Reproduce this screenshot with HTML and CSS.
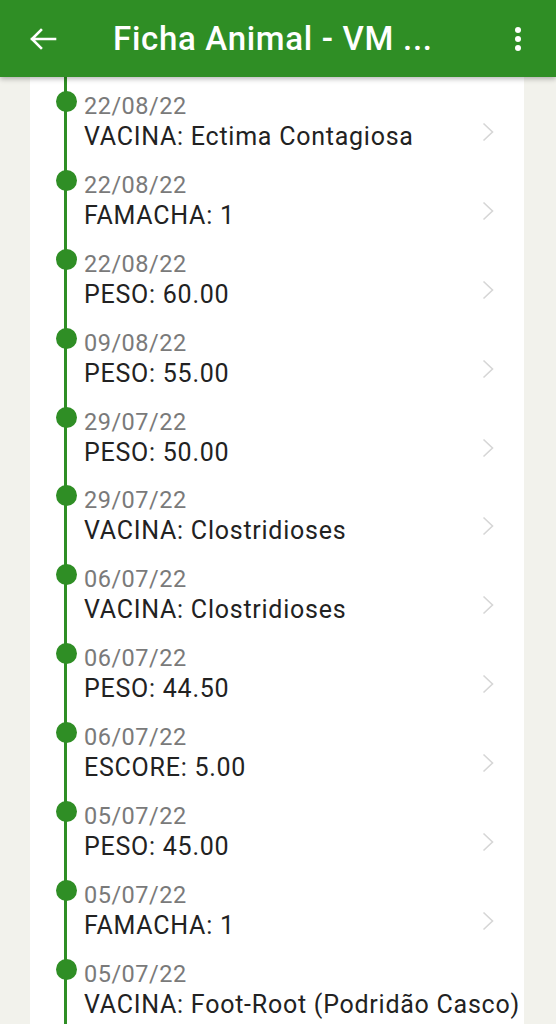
FILE: index.html
```html
<!DOCTYPE html>
<html lang="pt">
<head>
<meta charset="utf-8">
<title>Ficha Animal</title>
<link rel="stylesheet" href="styles.css">
</head>
<body>
<header class="appbar">
  <svg class="back" width="28" height="22" viewBox="0 0 28 22"><path d="M26 11H3M12 2L3 11l9 9" fill="none" stroke="#fff" stroke-width="2.6" stroke-linecap="square" stroke-linejoin="miter"/></svg>
  <h1 class="title">Ficha Animal - VM ...</h1>
  <svg class="menu" width="8" height="26" viewBox="0 0 8 26"><circle cx="4" cy="4" r="3"/><circle cx="4" cy="13" r="3"/><circle cx="4" cy="22" r="3"/></svg>
</header>
<main class="card">
  <ul class="timeline">
    <li class="item"><span class="dot"></span><div class="text"><div class="date">22/08/22</div><div class="label">VACINA: Ectima Contagiosa</div></div><svg class="chev" viewBox="0 0 12 20"><path d="M1.5 1.5l9 8.5-9 8.5"/></svg></li>
    <li class="item"><span class="dot"></span><div class="text"><div class="date">22/08/22</div><div class="label">FAMACHA: 1</div></div><svg class="chev" viewBox="0 0 12 20"><path d="M1.5 1.5l9 8.5-9 8.5"/></svg></li>
    <li class="item"><span class="dot"></span><div class="text"><div class="date">22/08/22</div><div class="label">PESO: 60.00</div></div><svg class="chev" viewBox="0 0 12 20"><path d="M1.5 1.5l9 8.5-9 8.5"/></svg></li>
    <li class="item"><span class="dot"></span><div class="text"><div class="date">09/08/22</div><div class="label">PESO: 55.00</div></div><svg class="chev" viewBox="0 0 12 20"><path d="M1.5 1.5l9 8.5-9 8.5"/></svg></li>
    <li class="item"><span class="dot"></span><div class="text"><div class="date">29/07/22</div><div class="label">PESO: 50.00</div></div><svg class="chev" viewBox="0 0 12 20"><path d="M1.5 1.5l9 8.5-9 8.5"/></svg></li>
    <li class="item"><span class="dot"></span><div class="text"><div class="date">29/07/22</div><div class="label">VACINA: Clostridioses</div></div><svg class="chev" viewBox="0 0 12 20"><path d="M1.5 1.5l9 8.5-9 8.5"/></svg></li>
    <li class="item"><span class="dot"></span><div class="text"><div class="date">06/07/22</div><div class="label">VACINA: Clostridioses</div></div><svg class="chev" viewBox="0 0 12 20"><path d="M1.5 1.5l9 8.5-9 8.5"/></svg></li>
    <li class="item"><span class="dot"></span><div class="text"><div class="date">06/07/22</div><div class="label">PESO: 44.50</div></div><svg class="chev" viewBox="0 0 12 20"><path d="M1.5 1.5l9 8.5-9 8.5"/></svg></li>
    <li class="item"><span class="dot"></span><div class="text"><div class="date">06/07/22</div><div class="label">ESCORE: 5.00</div></div><svg class="chev" viewBox="0 0 12 20"><path d="M1.5 1.5l9 8.5-9 8.5"/></svg></li>
    <li class="item"><span class="dot"></span><div class="text"><div class="date">05/07/22</div><div class="label">PESO: 45.00</div></div><svg class="chev" viewBox="0 0 12 20"><path d="M1.5 1.5l9 8.5-9 8.5"/></svg></li>
    <li class="item"><span class="dot"></span><div class="text"><div class="date">05/07/22</div><div class="label">FAMACHA: 1</div></div><svg class="chev" viewBox="0 0 12 20"><path d="M1.5 1.5l9 8.5-9 8.5"/></svg></li>
    <li class="item"><span class="dot"></span><div class="text"><div class="date">05/07/22</div><div class="label">VACINA: Foot-Root (Podridão Casco)</div></div><svg class="chev" viewBox="0 0 12 20"><path d="M1.5 1.5l9 8.5-9 8.5"/></svg></li>
  </ul>
</main>
</body>
</html>
```

FILE: styles.css
```css
html, body {
  margin: 0;
  padding: 0;
  height: 1024px;
  overflow: hidden;
}
body {
  background: #f2f2ec;
  font-family: Roboto, "Liberation Sans", sans-serif;
}
.appbar {
  position: relative;
  z-index: 2;
  height: 77px;
  background: #2f8e25;
  display: flex;
  align-items: center;
  box-shadow: 0 2px 5px rgba(0,0,0,0.28);
}
.back {
  margin-left: 29px;
  margin-top: 1px;
  flex: none;
}
.title {
  margin: 0 0 0 56px;
  flex: 1;
  color: #fff;
  font-size: 33px;
  font-weight: 500;
  letter-spacing: 0.7px;
  white-space: nowrap;
}
.menu {
  fill: #fff;
  margin-right: 34px;
  margin-top: 1px;
  flex: none;
}
.card {
  display: block;
  margin: 0 32px 0 30px;
  height: 947px;
  background: #fff;
  overflow: hidden;
}
.timeline {
  list-style: none;
  margin: 0;
  padding: 14px 0 0 0;
  min-height: 100%;
  box-sizing: border-box;
  background: linear-gradient(to right, transparent 34.5px, #2f8e25 34.5px, #2f8e25 37.5px, transparent 37.5px);
}
.item {
  display: flex;
  align-items: flex-start;
  height: 78.9px;
}
.dot {
  flex: none;
  width: 21px;
  height: 21px;
  border-radius: 50%;
  background: #2f8e25;
  margin-left: 25.5px;
  margin-right: 7.5px;
}
.text {
  flex: 1 0 auto;
  white-space: nowrap;
}
.date {
  margin-top: 2px;
  font-size: 23.5px;
  line-height: 26px;
  letter-spacing: 0.5px;
  color: #7a7a7a;
}
.label {
  margin-top: 3px;
  font-size: 25px;
  line-height: 30px;
  letter-spacing: 0.75px;
  color: #222;
}
.chev {
  flex: none;
  width: 12px;
  height: 20px;
  margin: 31px 30px 0 12px;
  fill: none;
  stroke: #d6d6d6;
  stroke-width: 1.6;
}
```
